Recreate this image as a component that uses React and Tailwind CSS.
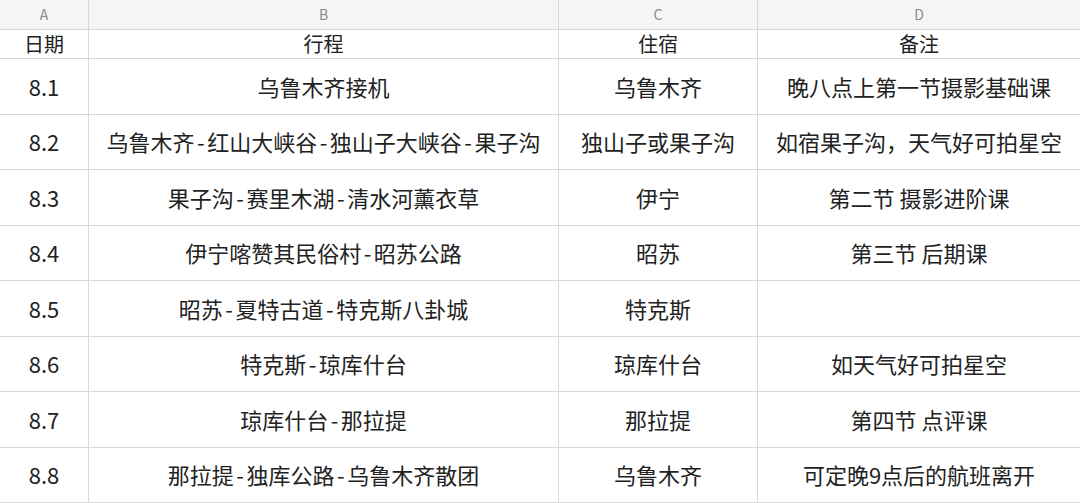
const rows = [
  ["8.1", "乌鲁木齐接机", "乌鲁木齐", "晚八点上第一节摄影基础课"],
  ["8.2", "乌鲁木齐-红山大峡谷-独山子大峡谷-果子沟", "独山子或果子沟", "如宿果子沟，天气好可拍星空"],
  ["8.3", "果子沟-赛里木湖-清水河薰衣草", "伊宁", "第二节 摄影进阶课"],
  ["8.4", "伊宁喀赞其民俗村-昭苏公路", "昭苏", "第三节 后期课"],
  ["8.5", "昭苏-夏特古道-特克斯八卦城", "特克斯", ""],
  ["8.6", "特克斯-琼库什台", "琼库什台", "如天气好可拍星空"],
  ["8.7", "琼库什台-那拉提", "那拉提", "第四节 点评课"],
  ["8.8", "那拉提-独库公路-乌鲁木齐散团", "乌鲁木齐", "可定晚9点后的航班离开"],
];

const widths = ["w-[89px]", "w-[470px]", "w-[199px]", "flex-1"];

// hyphens in the sheet render a bit wider than Noto's
function withDashes(text) {
  const parts = text.split("-");
  return parts.map((p, i) => (
    <span key={i}>
      {i > 0 && <span className="mx-[2.5px]">-</span>}
      {p}
    </span>
  ));
}

function Row({ cells, className, textClass }) {
  return (
    <div className={`flex border-b border-[#d9d9d9] ${className}`}>
      {cells.map((c, i) => (
        <div
          key={i}
          className={`${widths[i]} flex items-center justify-center whitespace-nowrap ${i < 3 ? "border-r border-[#d9d9d9]" : ""} ${textClass}`}
        >
          {withDashes(c)}
        </div>
      ))}
    </div>
  );
}

export default function App() {
  return (
    <div
      className="w-[1080px] h-[503px] overflow-hidden bg-white text-[#222]"
      style={{ fontFamily: '"Noto Sans CJK SC", "Noto Sans", sans-serif' }}
    >
      <Row
        cells={["A", "B", "C", "D"]}
        className="h-[30px] bg-[#f5f5f5]"
        textClass="text-[14px] text-[#8a8a8a]"
      />
      <Row
        cells={["日期", "行程", "住宿", "备注"]}
        className="h-[29px]"
        textClass="text-[20px]"
      />
      {rows.map((r) => (
        <Row key={r[0]} cells={r} className="h-[55.5px]" textClass="text-[22px]" />
      ))}
    </div>
  );
}
